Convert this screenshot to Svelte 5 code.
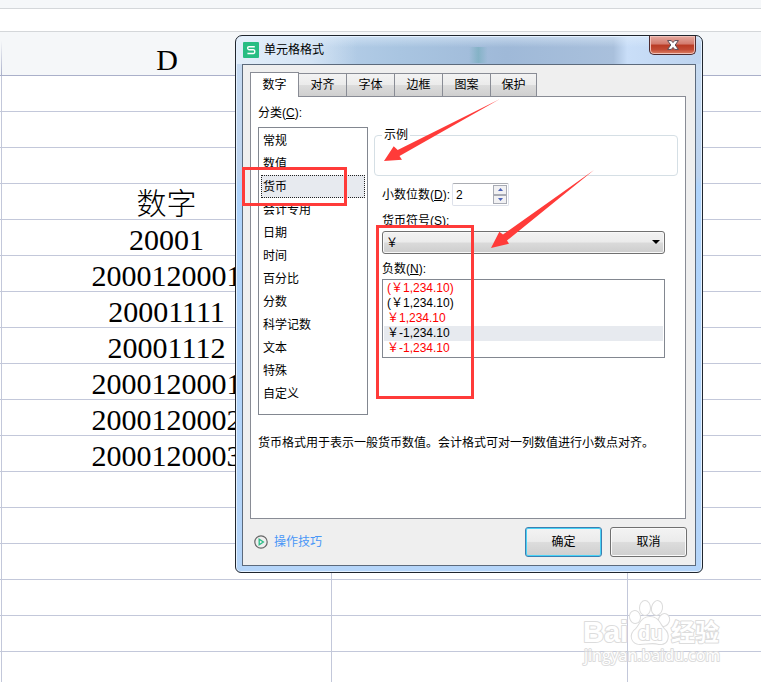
<script>
  const yuan = '\uFFE5';
  const tabs = ['数字', '对齐', '字体', '边框', '图案', '保护'];
  const categories = ['常规', '数值', '货币', '会计专用', '日期', '时间', '百分比', '分数', '科学记数', '文本', '特殊', '自定义'];
  const formats = [
    { text: `(${yuan}1,234.10)`, red: true },
    { text: `(${yuan}1,234.10)`, red: false },
    { text: `${yuan}1,234.10`, red: true },
    { text: `${yuan}-1,234.10`, red: false },
    { text: `${yuan}-1,234.10`, red: true }
  ];
  const cells = ['', '', '', '数字', '20001', '2000120001', '20001111', '20001112', '2000120001', '2000120002', '2000120003', '', '', '', '', '', ''];

  let tab = $state(0);
  let category = $state(2);
  let format = $state(3);
  let decimals = $state(2);
</script>

<main class="page">
  <div class="toolbar"></div>
  <div class="formula"></div>
  <table class="sheet">
    <colgroup><col class="edge" /><col class="d" /><col class="e" /><col /></colgroup>
    <thead>
      <tr><th></th><th>D</th><th></th><th></th></tr>
    </thead>
    <tbody>
      {#each cells as cell}
        <tr><td></td><td class="value"><span>{cell}</span></td><td></td><td></td></tr>
      {/each}
    </tbody>
  </table>

  <section class="window" role="dialog" aria-labelledby="title">
    <header class="titlebar">
      <svg class="logo" width="16" height="16" viewBox="0 0 16 16" aria-hidden="true">
        <rect width="16" height="16" rx="1" fill="#27bd83" />
        <path d="M11.8 4.7H6Q4.6 4.7 4.6 6.1T6 7.8H10.4Q11.8 7.8 11.8 9.6T10.4 11.5H4.4" fill="none" stroke="#fff" stroke-width="1.4" />
      </svg>
      <h1 id="title">单元格格式</h1>
      <button class="close" aria-label="关闭">
        <svg width="12" height="10" viewBox="0 0 12 10" aria-hidden="true">
          <path d="M.6 .6H4.3L6 2.6 7.7.6H11.4L8.2 5 11.4 9.4H7.7L6 7.4 4.3 9.4H.6L3.8 5Z" fill="#fff" stroke="#5b4a55" stroke-width="1" />
        </svg>
      </button>
    </header>

    <div class="client">
      <div class="tabs" role="tablist">
        {#each tabs as name, i}
          <button role="tab" class:active={tab === i} aria-selected={tab === i} onclick={() => (tab = i)}>{name}</button>
        {/each}
      </div>

      <div class="panel" role="tabpanel">
        <div class="columns">
          <div class="left">
            <div class="label" id="cat">分类(<u>C</u>):</div>
            <ul class="categories" role="listbox" aria-labelledby="cat">
              {#each categories as name, i}
                <li role="option" aria-selected={category === i}>
                  <button class:selected={category === i} onclick={() => (category = i)}>{name}</button>
                </li>
              {/each}
            </ul>
          </div>

          <div class="right">
            <fieldset><legend>示例</legend></fieldset>
            <div class="settings">
              <div class="decimals">
                <label for="decimals">小数位数(<u>D</u>):</label>
                <div class="spinner">
                  <input id="decimals" type="text" bind:value={decimals} />
                  <div class="steps">
                    <button aria-label="增加" onclick={() => (decimals = +decimals + 1)}>
                      <svg width="5" height="3" viewBox="0 0 5 3"><path d="M0 3 2.5 0 5 3Z" fill="#4a62b8" /></svg>
                    </button>
                    <button aria-label="减少" onclick={() => (decimals = Math.max(0, decimals - 1))}>
                      <svg width="5" height="3" viewBox="0 0 5 3"><path d="M0 0 2.5 3 5 0Z" fill="#4a62b8" /></svg>
                    </button>
                  </div>
                </div>
              </div>
              <label class="label symbol" for="symbol">货币符号(<u>S</u>):</label>
              <div class="combo">
                <select id="symbol"><option>{yuan}</option></select>
                <svg width="8" height="4" viewBox="0 0 8 4" aria-hidden="true"><path d="M0 0H8L4 4Z" /></svg>
              </div>
              <div class="label negative" id="neg">负数(<u>N</u>):</div>
              <ul class="formats" role="listbox" aria-labelledby="neg">
                {#each formats as item, i}
                  <li role="option" aria-selected={format === i}>
                    <button class:selected={format === i} class:red={item.red} onclick={() => (format = i)}>{item.text}</button>
                  </li>
                {/each}
              </ul>
            </div>
          </div>
        </div>
        <p>货币格式用于表示一般货币数值。会计格式可对一列数值进行小数点对齐。</p>
      </div>

      <footer>
        <a href="#tips">
          <svg width="14" height="14" viewBox="0 0 14 14" aria-hidden="true">
            <circle cx="7" cy="7" r="6.2" fill="none" stroke="#666" stroke-width="1.2" />
            <path d="M5.2 4.2V9.8L9.4 7Z" fill="none" stroke="#2bbd87" stroke-width="1.3" />
          </svg>
          操作技巧
        </a>
        <button class="push primary">确定</button>
        <button class="push">取消</button>
      </footer>
    </div>
  </section>

  <svg class="marks" width="761" height="682" viewBox="0 0 761 682" aria-hidden="true">
    <g fill="none" stroke="#ff3b39" stroke-width="3">
      <rect x="243.5" y="168.5" width="102" height="36" />
      <rect x="377.5" y="226.5" width="95" height="171" />
    </g>
    <g fill="#ff3b39">
      <path d="M384 161 393.7 146.3 397.7 150 499.5 99.3 399.5 156 402 159.7Z" />
      <path d="M491 248 499.3 231.7 503 234.5 594 170 507 240.5 509 243.7Z" />
    </g>
  </svg>

  <svg class="watermark" width="150" height="72" viewBox="0 0 150 72" aria-hidden="true">
    <g fill="#fff" stroke="#dcdcdc" stroke-width="2" paint-order="stroke" stroke-linejoin="round">
      <text class="brand" x="3" y="45" font-size="29">Bai</text>
      <ellipse cx="55" cy="20" rx="5" ry="6" transform="rotate(-12 55 20)" />
      <ellipse cx="65" cy="11" rx="5" ry="7" />
      <ellipse cx="77" cy="11" rx="5" ry="7" transform="rotate(12 77 11)" />
      <ellipse cx="84" cy="23" rx="5" ry="6" transform="rotate(22 84 23)" />
      <path d="M70 20C61 20 60 28 56 32 49 37 51 47 60 47 66 47 73 45 79 47 89 48 90 37 84 32 80 28 79 20 70 20Z" />
      <text class="brand" x="58" y="43" font-size="20">du</text>
      <text class="brand" x="91" y="44" font-size="24">经验</text>
      <text class="site" x="4" y="64" font-size="16">jingyan.baidu.com</text>
    </g>
  </svg>
</main>

<style>
  :global(body) { margin: 0; background: #fff; }
  .page {
    position: relative;
    height: 100vh;
    overflow: hidden;
    font: 12px/16px "Liberation Sans", "Noto Sans CJK SC", sans-serif;
    color: #000;
  }
  button, input, select { font: inherit; color: inherit; margin: 0; box-sizing: border-box; }
  ul { list-style: none; margin: 0; }

  .toolbar { height: 8px; background: #f5f7f9; border-bottom: 1px solid #d4d7da; }
  .formula { height: 22px; border-bottom: 1px solid #d4d7da; }
  .sheet {
    width: 100%;
    table-layout: fixed;
    border-spacing: 0;
    font: 30px/34px "Liberation Serif", "Noto Sans CJK SC", serif;
  }
  .edge { width: 2px; }
  .d { width: 330px; }
  .e { width: 296px; }
  th, td {
    box-sizing: border-box;
    height: 36px;
    padding: 0;
    border: 0 solid #c3c8da;
    border-width: 0 1px 1px 0;
    text-align: center;
  }
  th {
    height: 44px;
    padding-top: 12px;
    line-height: 30px;
    background: linear-gradient(#f5f7f9 20%, #aab0ca) right / 1px 100% no-repeat #f5f7f9;
    border-right: 0;
    border-bottom-color: #aab0ca;
    font-weight: 400;
  }
  th:last-child { background: #f5f7f9; }
  td:last-child { border-right: 0; }
  td span { display: block; height: 35px; padding-top: 4px; box-sizing: border-box; line-height: 32px; font-weight: 300; }

  .window {
    position: absolute;
    left: 235px;
    top: 35px;
    width: 468px;
    box-sizing: border-box;
    padding: 0 6px 6px;
    border: 1px solid #20262e;
    border-radius: 7px 7px 6px 6px;
    box-shadow: inset 0 0 0 1px #e4f1ff;
    background:
      linear-gradient(90deg, #ecf4fcc0, #e4effaa0 16%, transparent 26%) 0 0 / 100% 28px no-repeat,
      linear-gradient(#e2effc90, transparent 40%) 0 0 / 100% 28px no-repeat,
      linear-gradient(90deg, transparent 50%, #5fa6ac70 52%, transparent 54%) 0 11px / 100% 16px no-repeat,
      linear-gradient(90deg, #c5daf1, #a9c5e1 35%, #9fb9d8 58%, #a9c0dc 81%, #c9def8 84%, #bdd3ee) 0 0 / 100% 28px no-repeat,
      linear-gradient(#c9dcf1, #bcd3ef 140px, #aed3fb 150px, #b5d5f9);
  }
  .titlebar { display: flex; align-items: center; gap: 5px; height: 28px; padding-left: 1px; }
  .titlebar h1 { flex: 1; margin: 0; font-size: 12px; line-height: 16px; font-weight: 400; }
  .close {
    align-self: flex-start;
    display: flex;
    align-items: center;
    justify-content: center;
    width: 47px;
    height: 19px;
    padding: 0;
    border: 1px solid #4d2a2e;
    border-top: 0;
    border-radius: 0 0 5px 5px;
    background: linear-gradient(#e5aaa0, #d3796c 45%, #b93a24 50%, #c24a34 75%, #dd8368);
    box-shadow: inset 0 0 0 1px #f0c0b8;
  }
  .client { border: 1px solid #5c6a7c; background: #efefef; padding: 7px 8px 8px 7px; }

  .tabs { display: flex; align-items: flex-end; }
  .tabs button {
    width: 48px;
    height: 23px;
    padding: 0;
    border: 1px solid #898c95;
    border-left-width: 0;
    border-bottom: 0;
    background: linear-gradient(#f3f3f3, #ebebeb 50%, #dcdcdc 52%, #cfcfcf);
  }
  .tabs button.active {
    position: relative;
    width: 49px;
    height: 25px;
    margin-bottom: -1px;
    border-left-width: 1px;
    background: #fff;
  }
  .tabs button:last-child { width: 46px; }
  .panel { margin-right: 1px; border: 1px solid #898c95; background: #fff; padding: 8px 7px 67px; }
  .columns { display: flex; gap: 6px; }
  .left { width: 110px; }
  .right { flex: 1; padding-top: 22px; }
  .label { display: block; height: 16px; }
  .categories {
    margin-top: 6px;
    padding: 1px 2px 9px;
    border: 1px solid #828790;
  }
  .categories button {
    display: block;
    width: 100%;
    height: 23px;
    padding: 0 1px;
    border: 1px solid transparent;
    background: none;
    text-align: left;
  }
  .categories .selected { background: #e7eaef; border: 1px dotted #222; }

  fieldset {
    box-sizing: border-box;
    height: 49px;
    margin: 0;
    padding: 0 7px;
    border: 1px solid #d5dfe5;
    border-radius: 4px;
  }
  legend { padding: 0 2px; line-height: 16px; }
  .settings { padding: 7px 13px 0 8px; }
  .decimals { display: flex; align-items: center; gap: 2px; }
  .decimals label { width: 68px; white-space: nowrap; }
  .spinner {
    display: flex;
    box-sizing: border-box;
    width: 57px;
    height: 23px;
    padding: 1px;
    border: 1px solid #dde1ea;
    border-top-color: #abadb3;
    border-radius: 2px;
  }
  .spinner input { flex: 1; min-width: 0; padding: 0 2px; border: 0; outline: 0; background: none; }
  .steps { display: flex; flex-direction: column; }
  .steps button {
    flex: 1;
    display: flex;
    align-items: center;
    justify-content: center;
    width: 14px;
    padding: 0;
    border: 1px solid #a8abb4;
    background: #f1f1f3;
  }
  .symbol { margin-top: 7px; }
  .combo { position: relative; margin-top: 2px; }
  .combo select {
    display: block;
    appearance: none;
    width: 100%;
    height: 23px;
    padding: 0 3px;
    border: 1px solid #707070;
    border-radius: 3px;
    background: linear-gradient(#f2f2f2, #ebebeb 48%, #dadada 52%, #cdcdcd);
    box-shadow: inset 0 0 0 1px #f8f8f8;
  }
  .combo svg { position: absolute; right: 5px; top: 9px; pointer-events: none; }
  .negative { margin-top: 7px; }
  .formats { margin-top: 2px; padding: 1px; border: 1px solid #828790; }
  .formats button {
    display: block;
    width: 100%;
    height: 15px;
    padding: 0 3px;
    border: 0;
    background: none;
    text-align: left;
    line-height: 15px;
  }
  .formats .selected { background: #e7eaef; }
  .formats .red { color: #f00; }
  p { margin: 20px 0 0; line-height: 16px; white-space: nowrap; }

  footer { display: flex; align-items: center; gap: 8px; padding-top: 8px; }
  footer a {
    flex: 1;
    display: flex;
    align-items: center;
    gap: 6px;
    padding-left: 4px;
    color: #4896f7;
    text-decoration: none;
  }
  .push {
    width: 77px;
    height: 30px;
    padding: 0;
    border: 1px solid #707070;
    border-radius: 3px;
    background: linear-gradient(#f3f3f3, #ebebeb 48%, #dcdcdc 52%, #cfcfcf);
    box-shadow: inset 0 0 0 1px #fafafa;
  }
  .primary { border-color: #3c7fb1; box-shadow: inset 0 0 0 1px #49d3f7; }

  .marks { position: absolute; left: 0; top: 0; pointer-events: none; }
  .watermark { position: absolute; left: 580px; top: 597px; pointer-events: none; }
  .brand { font-family: "Liberation Sans", "Noto Sans CJK SC", sans-serif; font-weight: 700; }
  .site { font-family: "Open Sans", sans-serif; }
</style>
